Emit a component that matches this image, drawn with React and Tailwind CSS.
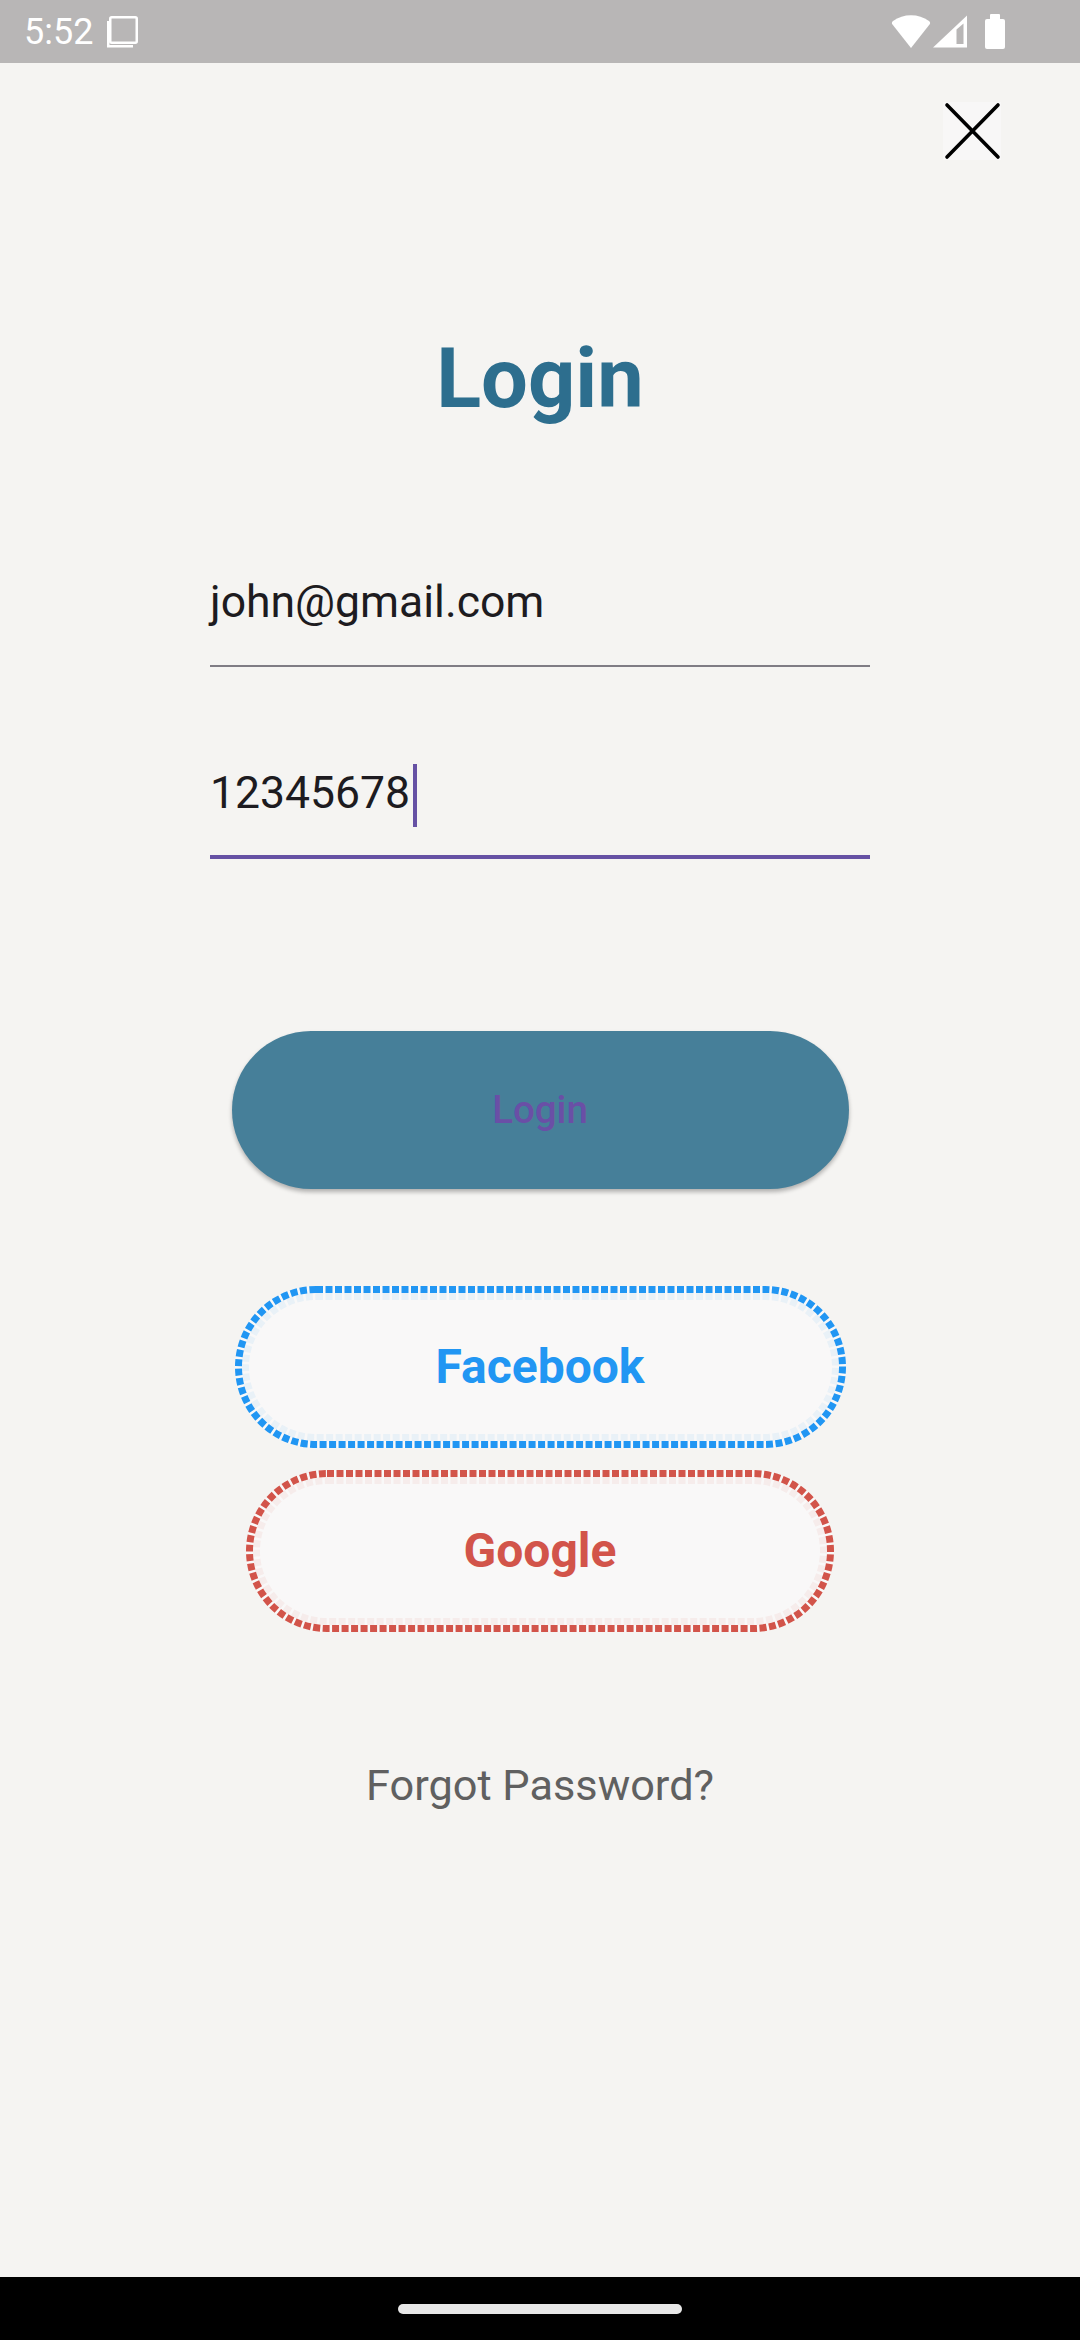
import React from "react";

function DashedPill({ w, h, color, children, bg }) {
  const sw = 7;
  return (
    <div
      className={`relative mx-auto flex items-center justify-center rounded-full ${bg}`}
      style={{ width: w, height: h }}
    >
      <svg className="absolute inset-0" width={w} height={h} viewBox={`0 0 ${w} ${h}`}>
        <rect
          x={sw / 2}
          y={sw / 2}
          width={w - sw}
          height={h - sw}
          rx={(h - sw) / 2}
          fill="none"
          stroke={color}
          strokeWidth={sw}
          strokeDasharray="7 2.5"
        />
        <rect
          x={sw * 1.5}
          y={sw * 1.5}
          width={w - sw * 3}
          height={h - sw * 3}
          rx={(h - sw * 3) / 2}
          fill="none"
          stroke={color}
          strokeOpacity="0.07"
          strokeWidth={sw}
          strokeDasharray="7 2.5"
        />
      </svg>
      {children}
    </div>
  );
}

export default function App() {
  return (
    <div className="w-[1080px] h-[2340px] bg-[#f5f4f2] flex flex-col font-[Roboto,sans-serif] overflow-hidden">
      {/* Status bar */}
      <div className="h-[63px] bg-[#b8b6b6] flex items-center pl-[24px] pr-[75px] text-white shrink-0">
        <span className="text-[36px] leading-none">5:52</span>
        <svg className="ml-[14px]" width="33" height="33" viewBox="0 0 33 33">
          <rect x="3.25" y="2.25" width="26.5" height="25.5" rx="1.5" fill="none" stroke="white" strokeWidth="2.5" />
          <path d="M1.25 6 V31.25 H26" fill="none" stroke="white" strokeWidth="2.5" />
        </svg>
        <div className="ml-auto flex items-center">
          <svg width="40" height="35" viewBox="0 0 40 35">
            <path d="M20 34 L1.5 10.5 Q0 8.5 2 7 A31 31 0 0 1 38 7 Q40 8.5 38.5 10.5 Z" fill="white" />
          </svg>
          <svg className="ml-[2px]" width="34" height="33" viewBox="0 0 34 33">
            <path d="M0 32.5 L34 0.5 L34 32.5 Z" fill="white" />
            <path d="M23.5 29 L23.5 14.5 L30.5 8.5 L30.5 29 Z" fill="#b8b6b6" />
          </svg>
          <svg className="ml-[18px]" width="20" height="36" viewBox="0 0 20 36">
            <rect x="5" y="0" width="10" height="6" rx="1" fill="white" />
            <rect x="0" y="5" width="20" height="30" rx="2" fill="white" />
          </svg>
        </div>
      </div>

      {/* Main */}
      <div className="flex-1 flex flex-col">
        <div className="mt-[39px] flex justify-end pr-[79px]">
          <div className="w-[58px] h-[58px] bg-[#f8f7f7] flex items-center justify-center">
            <svg width="58" height="58" viewBox="0 0 58 58">
              <path d="M4 3 L55 55 M55 3 L4 55" stroke="#000" strokeWidth="3.6" strokeLinecap="round" />
            </svg>
          </div>
        </div>

        <div className="mt-[169px] h-[100px] text-center text-[83px] leading-[100px] font-bold text-[#2d6e8e]">
          Login
        </div>

        {/* Email */}
        <div className="mt-[147px] ml-[210px] w-[660px] pb-[37px] border-b-[2px] border-[#7f7c84]">
          <div className="h-[52px] text-[44.5px] leading-[52px] text-[#1d1b20]">john@gmail.com</div>
        </div>

        {/* Password */}
        <div className="mt-[100px] ml-[210px] w-[660px] pb-[36px] border-b-[4px] border-[#6651a4]">
          <div className="h-[52px] flex items-start">
            <span className="text-[44.5px] leading-[52px] text-[#1d1b20]">12345678</span>
            <span className="ml-[3px] mt-[-3px] w-[4px] h-[63px] bg-[#6651a4] shrink-0" />
          </div>
        </div>

        {/* Login button */}
        <div className="mt-[172px] mx-auto w-[617px] h-[158px] rounded-full bg-[#467f99] shadow-[0_3px_4px_rgba(0,0,0,0.28)] flex items-center justify-center">
          <span className="text-[38.5px] font-medium text-[#6a4fa6]">Login</span>
        </div>

        {/* Facebook */}
        <div className="mt-[97px]">
          <DashedPill w={611} h={162} color="#2196f3" bg="bg-[#f9f8f8]">
            <span className="relative text-[48px] font-bold text-[#2196f3]">Facebook</span>
          </DashedPill>
        </div>

        {/* Google */}
        <div className="mt-[22px]">
          <DashedPill w={588} h={162} color="#d2544a" bg="bg-[#f9f8f8]">
            <span className="relative text-[48px] font-bold text-[#d2544a]">Google</span>
          </DashedPill>
        </div>

        <div className="mt-[129px] text-center text-[43.3px] leading-[50px] text-[#606060]">
          Forgot Password?
        </div>
      </div>

      {/* Nav bar */}
      <div className="h-[63px] bg-black flex items-center justify-center shrink-0">
        <div className="w-[284px] h-[10px] rounded-full bg-[#e8e8e8]" />
      </div>
    </div>
  );
}
